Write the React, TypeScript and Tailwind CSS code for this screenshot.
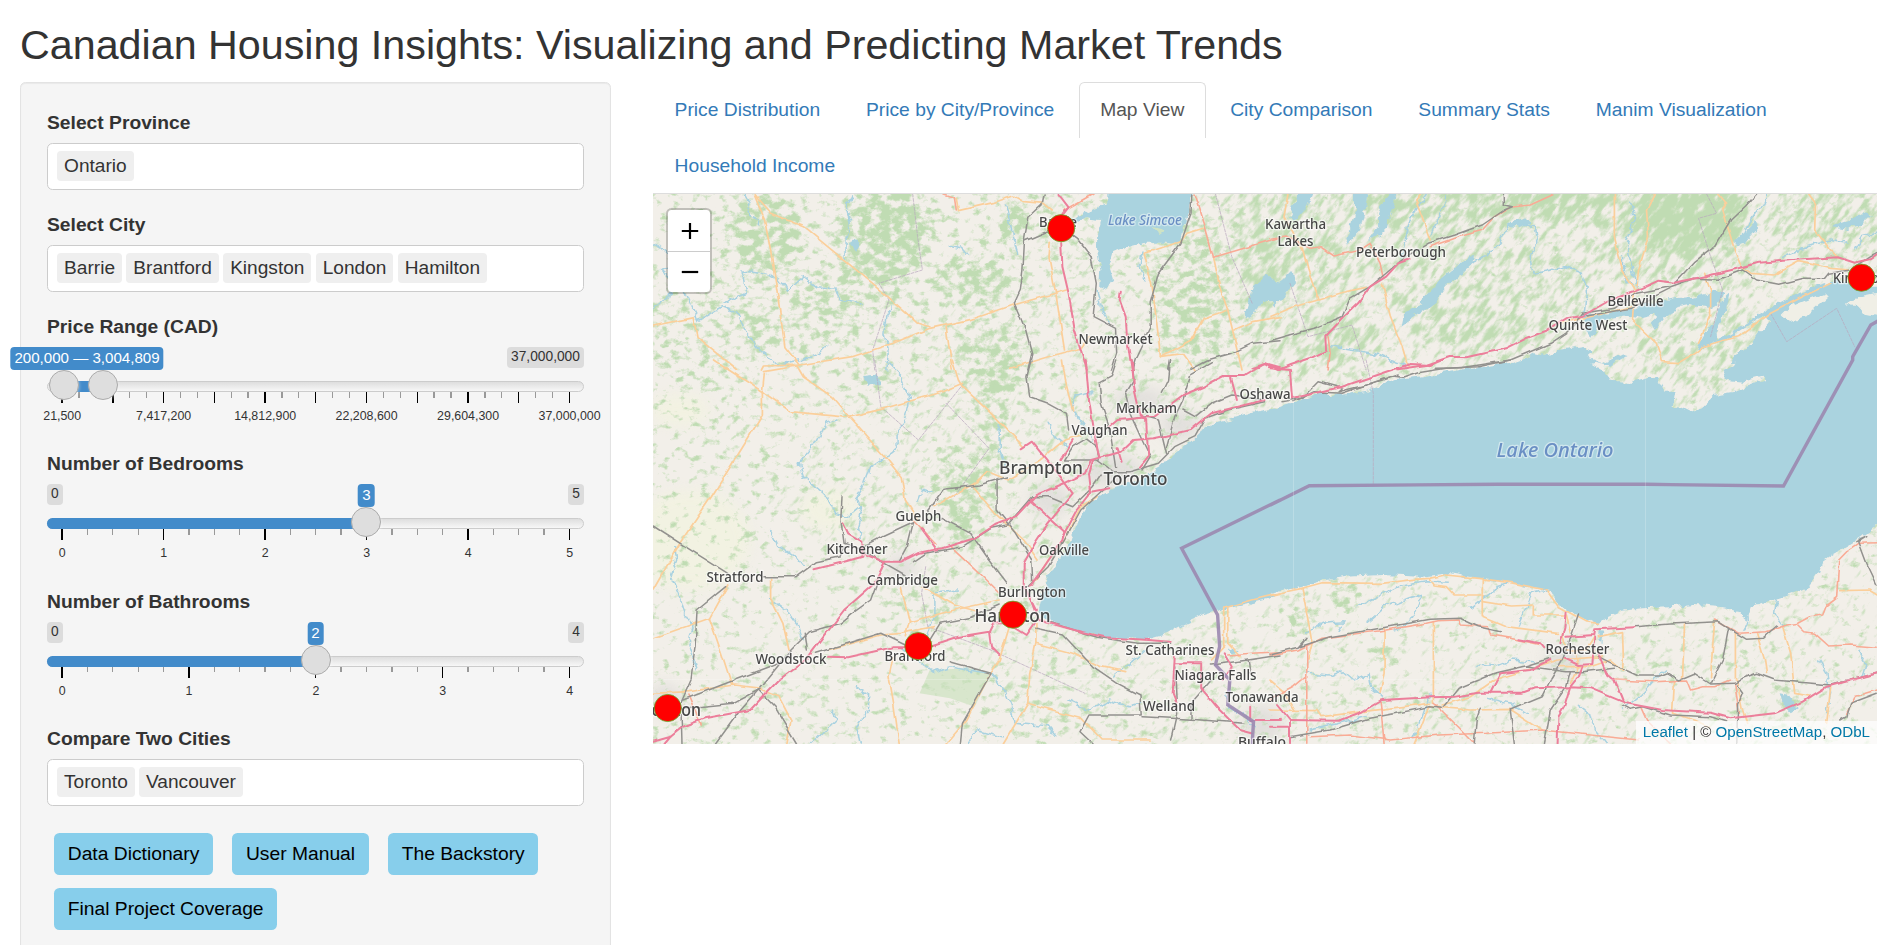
import React from "react";

/* ---------- sidebar ---------- */

function Label({ children }: { children: React.ReactNode }) {
  return (
    <div className="mb-[7px] h-[27.4px] text-[19.25px] leading-[27px] font-bold whitespace-nowrap">{children}</div>
  );
}

function MultiSelect({ label, items }: { label: string; items: string[] }) {
  return (
    <div className="mb-[20.7px]">
      <Label>{label}</Label>
      <div className="flex h-[46.75px] items-start gap-[4.5px] rounded-[5.5px] border border-[#ccc] bg-white pt-[7px] pl-[9.2px]">
        {items.map((i) => (
          <span
            key={i}
            className="h-[30px] rounded-[4px] bg-[#efefef] px-[6.9px] text-[19.1px] leading-[29.5px] text-[#333]"
          >
            {i}
          </span>
        ))}
      </div>
    </div>
  );
}

interface SliderProps {
  label: string;
  min?: string;
  max: string;
  value: string;
  valueAt: number;
  handles: number[];
  labels: string[];
  big: number;
  ticks: number;
}

function Slider({ label, min, max, value, valueAt, handles, labels, big, ticks }: SliderProps) {
  const from = handles.length > 1 ? handles[0] : 0;
  const to = handles[handles.length - 1];
  return (
    <div className="mb-[20.6px]">
      <Label>{label}</Label>
      <div className="relative h-[82.45px] leading-none">
        {min !== undefined && (
          <span className="absolute top-0 left-0 h-[21px] rounded-[4px] bg-[#dcdcdc] px-[4.1px] text-[13.75px] leading-[20px]">
            {min}
          </span>
        )}
        <span className="absolute top-0 right-0 h-[21px] rounded-[4px] bg-[#dcdcdc] px-[4.1px] text-[13.75px] leading-[20px]">
          {max}
        </span>
        <div className="absolute top-[34px] right-0 left-0 h-[11px] rounded-[6px] border border-[#ccc] bg-gradient-to-b from-[#dedede] to-[#f7f7f7]" />
        <div
          className={
            handles.length > 1
              ? "absolute top-[34px] h-[11px] bg-[#428bca]"
              : "absolute top-[34px] h-[11px] rounded-l-[6px] bg-[#428bca]"
          }
          style={{ left: from, width: to - from }}
        />
        {Array.from({ length: ticks + 1 }, (_, i) => {
          const isBig = i % big === 0;
          return (
            <div
              key={i}
              className={
                isBig
                  ? "absolute top-[45px] h-[11px] w-[1.4px] bg-black"
                  : "absolute top-[45px] h-[5.5px] w-[1.3px] bg-[#999]"
              }
              style={{ left: 14.4 + (507.4 * i) / ticks }}
            />
          );
        })}
        {labels.map((l, i) => (
          <span
            key={l}
            className="absolute top-[62px] -translate-x-1/2 text-[12.4px] leading-[14px] whitespace-nowrap"
            style={{ left: 15.2 + (507.4 * i) / (labels.length - 1) }}
          >
            {l}
          </span>
        ))}
        <span
          className="absolute top-0 h-[23px] -translate-x-1/2 rounded-[4px] bg-[#428bca] px-[4.1px] text-[15.1px] leading-[21px] whitespace-nowrap text-white"
          style={{ left: valueAt }}
        >
          {value}
        </span>
        {handles.map((h) => (
          <div
            key={h}
            className="absolute top-[23px] h-[30px] w-[30px] rounded-full border border-[#ababab] bg-[#dedede] shadow-[1px_1px_3px_rgba(255,255,255,0.3)]"
            style={{ left: h - 15 }}
          />
        ))}
      </div>
    </div>
  );
}

function LinkButton({ children }: { children: React.ReactNode }) {
  return (
    <button className="h-[42px] rounded-[5.5px] bg-[#87ceeb] px-[13.75px] text-[19.25px] leading-[41px] whitespace-nowrap text-black">
      {children}
    </button>
  );
}

/* ---------- map geometry ----------
   The drawing is digitised on four sheets; each has its own origin and scale. */

type Sheet = "nw" | "ne" | "sw" | "se";
const SHEETS: Record<Sheet, [number, number, number, number]> = {
  nw: [640, 70, 2.45, 3],
  ne: [1270, 70, 2.4968, 3],
  sw: [640, 360, 2.45, 3],
  se: [1270, 360, 2.4968, 3],
};

function pts(sheet: Sheet, s: string): string {
  const [ox, oy, sx, sy] = SHEETS[sheet];
  return s
    .trim()
    .split(/\s+/)
    .map((p) => {
      const [x, y] = p.split(",").map(Number);
      return (ox + x / sx).toFixed(1) + "," + (oy + y / sy).toFixed(1);
    })
    .join(" ");
}

function Lines({ data }: { data: [Sheet, string][] }) {
  return (
    <>
      {data.map(([sheet, s], i) => (
        <polyline key={i} points={pts(sheet, s)} />
      ))}
    </>
  );
}

const LAKE_ONTARIO = [
  pts("sw", "975,745 985,700 1000,650 1025,600 1050,560 1065,520 1075,480 1095,440 1120,410 1150,390 1180,375 1210,370 1235,355 1255,335 1285,315 1305,285 1340,255 1375,215 1410,190 1460,175 1500,158 1568,142"),
  pts("se", "60,128 110,106 180,104 240,92 310,58 370,50 440,37 520,20 590,7"),
  pts("ne", "600,885 640,868 660,850 690,858 720,840 780,828 805,845 790,862 830,880 850,870 880,850 895,855 870,872 850,885 810,875"),
  pts("se", "800,8 830,30 850,62 900,66 950,50 965,52 985,95 1010,95 1003,138 1030,140 1060,158 1085,135 1110,105 1160,95 1190,80 1237,60 1230,50 1180,65 1140,60 1130,30 1165,8"),
  pts("ne", "1150,880 1168,850 1205,820 1222,790 1250,755 1235,735 1200,760 1150,800 1130,822 1105,815 1130,800 1190,760 1260,705 1320,665 1360,650 1400,636 1440,632 1480,650 1540,650"),
  pts("se", "1540,480 1516,495 1480,530 1440,560 1410,580 1380,605 1370,640 1345,680 1310,700 1270,715 1220,735 1200,745 1190,785 1175,770 1160,748 1120,740 1060,735 1000,742 930,745 880,752 840,775 820,795 790,775 750,760 720,735 700,690 650,680 580,665 520,655 450,640 380,650 280,645 190,650 130,662 60,685 0,700"),
  pts("sw", "1568,705 1500,725 1435,745 1380,765 1330,795 1290,820 1240,838 1150,832 1080,815 1010,790 975,745"),
].join(" ");

const WATER: [Sheet, string][] = [
  ["nw", "1145,362 1352,362 1345,430 1330,480 1325,520 1290,515 1240,515 1190,530 1160,545 1150,590 1160,630 1145,660 1125,650 1128,600 1120,540 1120,490 1130,450 1090,445 1070,460 1055,445 1100,425 1145,400"],
  ["ne", "785,738 830,730 880,722 910,715 950,700 1010,685 1060,680 1110,665 1130,670 1120,700 1100,715 1060,705 1020,715 985,745 960,782 950,760 965,735 930,745 900,738 830,750 800,800 785,780"],
  ["ne", "1068,845 1080,800 1110,750 1130,690 1145,672 1135,730 1110,785 1112,812 1090,830"],
  ["ne", "328,770 335,730 370,705 400,670 425,630 455,600 480,570 510,555 505,580 470,620 440,650 410,700 370,735 345,755"],
  ["ne", "0,690 0,655 30,630 55,600 60,640 40,670 15,710"],
  ["ne", "48,440 60,400 70,362 108,362 95,405 75,430 60,450"],
  ["ne", "185,530 200,480 212,420 212,362 245,362 235,430 225,480 205,510"],
  ["ne", "245,510 270,470 270,430 285,390 305,362 318,362 300,430 295,470 270,500"],
  ["ne", "590,465 610,450 640,445 650,460 625,475"],
  ["ne", "1400,470 1450,450 1480,430 1500,436 1480,460 1440,480"],
  ["ne", "1160,520 1190,480 1215,450 1220,470 1190,510"],
  ["nw", "1478,740 1500,650 1535,620 1568,640 1568,700 1530,690 1500,745"],
  ["nw", "510,520 525,505 540,525 530,545"],
  ["sw", "552,45 585,40 588,75 560,80"],
  ["sw", "1440,870 1455,865 1462,880 1448,887"],
  ["se", "820,812 832,815 830,845 820,840"],
  ["se", "1275,1000 1295,1005 1320,1045 1300,1060 1285,1040"],
];

const ISLANDS: [Sheet, string][] = [
  ["ne", "1275,740 1300,710 1340,690 1385,670 1390,685 1365,710 1340,738 1300,757"],
  ["ne", "1440,705 1470,680 1530,665 1530,745 1490,735 1470,708"],
  ["ne", "1030,800 1050,780 1075,790 1060,815"],
];

const RIVERS: [Sheet, string][] = [
  ["nw", "258,372 270,400 262,430 290,450 290,470"],
  ["nw", "520,372 505,420 515,460 505,510 505,570"],
  ["nw", "32,520 60,540 100,560 50,600 110,660 145,750 200,710 240,730 260,790 300,850 340,885"],
  ["nw", "200,700 260,670 250,600 310,610 350,640 360,665 400,620 430,650 480,655 490,690 540,700"],
  ["nw", "32,720 70,680 80,640"],
  ["nw", "620,710 605,740 600,790 608,840 605,900"],
  ["nw", "760,525 790,535 805,555"],
  ["nw", "895,405 905,450 915,510 925,550"],
  ["nw", "1120,660 1130,720 1150,760"],
  ["nw", "1230,540 1225,590 1240,630"],
  ["nw", "340,885 400,870 440,850 460,825"],
  ["ne", "660,615 650,560 665,510 660,470 600,460 575,510 540,560 500,580"],
  ["ne", "660,610 700,600 740,590 780,610 790,660 785,730"],
  ["ne", "390,372 350,450 335,520 330,560"],
  ["ne", "400,500 425,430 440,380"],
  ["ne", "150,830 200,840 260,850 300,870 340,885"],
  ["ne", "900,400 910,440 890,520 905,600 915,650"],
  ["ne", "880,560 880,600 900,640"],
  ["ne", "1240,372 1230,400 1190,470 1170,520"],
  ["ne", "1280,560 1340,530 1400,510 1440,520"],
  ["ne", "1460,540 1480,500 1516,490"],
  ["sw", "600,0 640,50 660,110 650,170 630,220 630,260 600,290 565,320 550,370 530,410 545,460 535,500 540,540"],
  ["sw", "480,180 455,190 430,250 390,310 400,350 450,400 480,460 510,470 540,440"],
  ["sw", "85,560 90,600 75,650 95,700 110,760 130,800 120,850 140,930"],
  ["sw", "320,510 340,560 380,590 400,620"],
  ["sw", "880,200 880,270 900,330"],
  ["sw", "1000,190 1020,230 1050,260"],
  ["sw", "1105,95 1065,105 1060,150 1090,200 1110,240"],
  ["sw", "320,715 360,750 390,800 400,840"],
  ["sw", "700,830 720,770 720,700 780,690"],
  ["sw", "640,860 680,900 720,935 760,920 800,930 860,940 890,980 910,1040 920,1090 1000,1100 1020,1130"],
  ["sw", "525,980 560,1000 560,1050 530,1100 540,1152"],
  ["sw", "420,1152 480,1080 470,1050"],
  ["sw", "1050,1020 1100,1050 1150,1020 1200,1040 1230,1030"],
  ["sw", "1160,945 1200,910 1240,870"],
  ["sw", "680,420 690,390 720,400"],
  ["sw", "800,1152 830,1110 890,1130"],
  ["se", "215,740 270,710 320,680 390,665 445,670"],
  ["se", "240,790 290,740 350,710 380,700 360,760 340,800 310,810"],
  ["se", "90,820 130,790 185,785 170,815"],
  ["se", "500,745 540,710 570,680 600,670"],
  ["se", "620,795 640,740 655,700 690,690"],
  ["se", "95,940 150,945 180,930 210,960 245,940 250,980 285,1015"],
  ["se", "520,915 560,920 600,900 660,905"],
  ["se", "880,1050 930,1000 960,960 990,930"],
  ["se", "770,1030 800,1060 810,1110 840,1152"],
  ["se", "540,1015 600,1030 640,1060"],
  ["se", "1265,715 1260,760 1280,800"],
  ["se", "1370,900 1390,940 1400,1000 1390,1060"],
  ["se", "100,1110 170,1090 240,1070"],
  ["se", "360,1130 380,1070 400,1000"],
  ["se", "1470,870 1490,910 1480,950"],
  ["se", "1190,740 1195,790 1185,810"],
  ["sw", "1435,1000 1440,1040 1480,1070 1505,1100"],
];

const SECONDARY: [Sheet, string][] = [
  ["nw", "280,375 305,450 320,540 340,700 355,830 390,885"],
  ["nw", "280,375 320,430 400,470 480,550 580,650 680,760 710,770"],
  ["nw", "32,768 130,743 140,800 240,900"],
  ["nw", "300,900 305,888 390,885 520,860 620,820 710,775 820,745 915,705 1045,660"],
  ["nw", "750,770 765,900"],
  ["nw", "775,385 780,422 865,398 915,378 940,395 990,400 1010,420"],
  ["nw", "1005,520 1002,560 1020,680 1040,840"],
  ["nw", "905,895 1000,860 1080,835 1100,800"],
  ["nw", "1380,475 1340,490 1325,515 1235,550 1255,650 1270,800 1275,860 1350,810 1380,745 1440,720 1475,900"],
  ["nw", "1405,560 1420,650 1440,720"],
  ["nw", "1275,860 1330,850 1360,900"],
  ["nw", "1455,780 1500,755 1568,740"],
  ["ne", "0,740 60,710 120,690 190,665 240,652"],
  ["ne", "80,530 95,600 120,690"],
  ["ne", "45,372 35,440 80,540"],
  ["ne", "380,372 365,395 400,510"],
  ["ne", "280,640 300,740 330,830 345,890"],
  ["ne", "860,372 860,500 880,600 910,660 905,750 930,780 965,820 980,875 1020,878 1060,850 1080,830 1120,815 1170,800 1250,730 1330,680 1400,640"],
  ["ne", "960,372 940,420 945,500 920,600 915,660"],
  ["ne", "1120,372 1140,400 1130,420 1160,540 1180,595 1200,610 1260,615 1320,575 1400,595 1450,600"],
  ["ne", "1345,372 1362,400 1360,480 1400,540 1420,565"],
  ["ne", "1085,610 1100,660 1100,740 1070,820"],
  ["ne", "720,760 800,740 900,710"],
  ["sw", "180,0 300,95 370,155 510,172 600,145 740,95 790,70"],
  ["sw", "300,95 305,35 385,18"],
  ["sw", "385,18 400,50 470,110 515,175 600,290 640,350 650,420 680,480"],
  ["sw", "300,95 300,165 250,265 175,410 100,545 32,690"],
  ["sw", "765,0 780,60 790,80 860,160 940,260"],
  ["sw", "720,440 820,370 850,335 900,360 980,300 1040,240 1080,225"],
  ["sw", "1035,0 1045,80 1060,150"],
  ["sw", "815,380 870,460 940,540 975,600"],
  ["sw", "1120,410 1080,440 1040,540 1000,600 970,660"],
  ["sw", "320,655 320,715 350,790 365,870"],
  ["sw", "32,835 170,775 215,675"],
  ["sw", "170,775 200,880 225,975"],
  ["sw", "460,870 590,825 640,820 720,800"],
  ["sw", "660,785 770,750 880,720"],
  ["sw", "690,680 770,735 830,755"],
  ["sw", "640,680 660,785 650,830"],
  ["sw", "620,890 610,950 620,1020 635,1152"],
  ["sw", "970,790 970,850 955,940 950,1030"],
  ["sw", "905,800 880,900 850,960 800,1080 750,1152"],
  ["sw", "970,850 1060,880 1130,920 1190,935"],
  ["sw", "290,985 340,1010 370,1080 360,1152"],
  ["sw", "32,1000 120,995 230,975 300,985"],
  ["sw", "1430,745 1430,860 1400,900"],
  ["sw", "1440,745 1440,850 1470,890"],
  ["sw", "1430,745 1500,720 1568,700"],
  ["sw", "1000,1050 1080,1075 1130,1140 1250,1140"],
  ["sw", "890,1152 950,1030 1010,1050"],
  ["se", "0,705 80,685 130,668 280,670 360,658 400,655 440,645 520,655 600,668 690,690 720,740 790,785 820,790"],
  ["se", "80,685 95,780 105,850 95,900"],
  ["se", "285,805 285,940 275,1000"],
  ["se", "408,785 408,1030"],
  ["se", "400,658 410,675 440,680 460,705 530,705"],
  ["se", "530,655 530,770 590,800 720,820"],
  ["se", "530,725 600,738 660,735 660,765 740,765 750,820"],
  ["se", "730,820 740,870 790,870 810,830"],
  ["se", "820,830 880,815 882,890 880,930"],
  ["se", "1035,795 1030,960"],
  ["se", "1110,785 1105,860 1100,950"],
  ["se", "1162,820 1162,960"],
  ["se", "1215,820 1235,900 1240,940"],
  ["se", "1280,800 1300,880 1310,1000 1350,1010"],
  ["se", "1425,692 1495,690 1516,705"],
  ["se", "1010,965 1005,1060 1060,1080 1100,1100"],
  ["se", "400,1040 390,1060 360,1152"],
  ["se", "400,1040 500,1050 600,1048 680,1110"],
  ["se", "430,1035 500,1010 560,960 640,930 720,900 830,890"],
  ["se", "720,920 800,920 850,900 880,930"],
  ["se", "0,1050 120,1052 130,1070 400,1030"],
  ["se", "0,960 30,990 60,1050"],
  ["se", "1165,960 1180,1050 1190,1090"],
  ["se", "1400,980 1390,1090"],
  ["se", "760,870 770,920 750,970"],
];

const TRUNK: [Sheet, string][] = [
  ["nw", "745,372 770,382 775,420"],
  ["nw", "1040,420 1110,372"],
  ["nw", "1360,372 1385,470 1405,562 1480,535 1568,502"],
  ["ne", "0,505 40,498 100,535 125,530 160,558 225,540 250,520 275,580 282,620"],
  ["ne", "400,530 470,500 530,480 560,440 600,412 650,405 710,372"],
  ["ne", "145,800 150,850 145,900"],
  ["sw", "670,480 725,550"],
  ["sw", "760,560 830,640 880,700"],
  ["sw", "1440,885 1500,880 1568,875"],
  ["se", "0,885 70,870 130,835 290,810 390,790 420,782 470,780 475,795 545,800 550,825 600,835 680,855"],
  ["se", "92,860 92,1150"],
  ["se", "1110,780 1170,820 1240,815 1290,795 1320,790 1350,770 1380,765 1390,735 1415,712 1420,600 1440,575 1470,550 1516,548"],
  ["se", "1318,795 1335,815 1360,820 1395,858 1450,855 1516,862"],
  ["se", "860,960 960,965 1040,960 1050,990 1080,980 1110,980 1150,960"],
  ["se", "275,1020 285,1152"],
  ["se", "410,1030 470,1100 510,1150"],
  ["se", "100,1130 200,1125 300,1140 420,1125 540,1120 680,1110 800,1125 920,1140"],
  ["se", "925,1040 940,1080 1000,1152"],
  ["se", "1516,990 1460,1010 1440,1060"],
  ["se", "1160,970 1172,1060"],
  ["se", "0,1020 60,980 90,950"],
  ["sw", "120,1005 150,1095"],
];

const RAIL: [Sheet, string][] = [
  ["nw", "990,372 985,405 950,445 942,510 938,600 932,660 917,700 945,780 960,850 950,900"],
  ["nw", "942,513 990,488 1030,470 1070,505 1105,560 1118,640 1110,740 1165,775 1168,850 1155,900"],
  ["nw", "1352,372 1350,430 1325,520 1270,610 1250,700 1250,770 1215,860 1205,900"],
  ["nw", "1300,872 1295,900"],
  ["nw", "1350,895 1390,870 1450,850 1500,820 1568,812"],
  ["ne", "0,812 50,795 110,775 180,740 200,685 250,650 290,610 340,560 395,520 460,495 530,465 585,420 605,410 585,405 585,372"],
  ["ne", "415,895 480,893 600,870 700,820 745,785 780,730 860,715 915,670 1000,650 1060,625 1120,628 1180,600 1215,630 1270,643 1330,625 1385,625 1395,610 1450,600 1500,560 1516,550"],
  ["ne", "790,738 900,715 1000,655"],
  ["ne", "1010,640 1060,575 1110,530 1150,450 1190,405 1215,372"],
  ["sw", "958,0 948,50 955,110 1000,130 1045,160 1050,210"],
  ["sw", "1168,0 1155,50 1125,70 1130,130 1150,200 1165,320"],
  ["sw", "1205,0 1210,60 1190,100 1200,160 1230,240 1250,290 1230,330"],
  ["sw", "1300,0 1295,60 1280,100"],
  ["sw", "1400,5 1350,40 1330,120 1310,170 1290,260"],
  ["sw", "1330,150 1360,170 1400,130 1450,105 1530,120"],
  ["sw", "1530,125 1440,150 1385,175 1360,230 1310,260 1270,310 1200,335 1160,335 1120,300 1040,300 1060,260 1095,235 1120,260 1125,300"],
  ["sw", "1190,180 1240,170 1270,180 1290,280"],
  ["sw", "1160,360 1125,400 1080,450 1040,540 1000,620 950,680"],
  ["sw", "1130,345 1110,380 1060,440 1000,410 960,410 900,495 860,505 790,560 700,580 670,605"],
  ["sw", "900,350 830,375 745,388 705,455"],
  ["sw", "875,355 875,450 920,520 960,600 962,670"],
  ["sw", "740,475 810,520 850,590 900,670"],
  ["sw", "670,485 655,560 635,605"],
  ["sw", "495,410 492,480 500,550 545,570 600,610 650,645"],
  ["sw", "545,560 600,525 670,485"],
  ["sw", "500,560 490,590 430,605 380,650 300,650"],
  ["sw", "32,498 130,575 215,640"],
  ["sw", "210,680 140,750 135,860 125,960 100,1030 103,1152"],
  ["sw", "580,670 565,720 520,760 490,790 415,815 370,870 330,930 290,990 230,1030 105,1045"],
  ["sw", "105,1020 200,975 340,910"],
  ["sw", "430,880 590,820 650,855 700,860 735,790 810,772 880,735"],
  ["sw", "405,820 410,870"],
  ["sw", "760,905 860,940 790,1090 785,1152"],
  ["sw", "1000,785 1120,832 1220,850 1300,850"],
  ["sw", "970,805 1035,822 1110,920 1170,970 1225,1005 1228,1065 1100,1065 1078,1115 1110,1152"],
  ["sw", "1230,1070 1350,1078 1480,1090"],
  ["sw", "1310,920 1315,1060 1300,1140"],
  ["sw", "1400,915 1490,900 1568,885"],
  ["sw", "290,990 330,1040 385,1152"],
  ["sw", "290,990 240,1060 185,1152"],
  ["sw", "1400,960 1350,1030 1350,1078"],
  ["sw", "1490,900 1495,940"],
  ["se", "0,882 70,862 90,835 75,860 150,830 240,812 320,795 400,778 475,775 520,800 575,815"],
  ["se", "770,765 755,820 730,900 700,960 680,1010 600,1050"],
  ["se", "50,1130 150,1110 250,1075 400,1040 430,1045 470,985 560,940 640,918 700,895"],
  ["se", "640,918 740,935 780,935 860,925"],
  ["se", "820,890 870,920 920,948 970,948 990,938 1020,960 1060,940 1100,972 1160,970 1180,955 1215,940 1260,960 1400,975 1450,960 1516,940"],
  ["se", "1100,970 1130,900 1145,805 1120,785 1000,792 910,800"],
  ["se", "1145,805 1190,838 1230,835 1265,798"],
  ["se", "1465,545 1490,530 1470,545 1490,610 1516,675"],
  ["se", "1165,975 1180,1000 1170,1030 1168,1152"],
  ["se", "1516,1000 1450,1030 1440,1070 1425,1080"],
  ["se", "880,1035 900,1048 930,1040 1000,1065 1100,1070 1140,1085"],
  ["se", "525,1045 515,1080 510,1152"],
  ["se", "600,1050 610,1152"],
  ["se", "750,935 740,980 700,1050 685,1152"],
  ["se", "30,125 80,115 120,65 180,85 170,95 240,75 320,45"],
  ["se", "60,125 110,95 180,100 240,75 300,50 330,55 370,38 440,25 520,20 600,0"],
];

const MOTORWAY: [Sheet, string][] = [
  ["nw", "1025,372 1050,412 1035,435"],
  ["nw", "1032,520 1035,590 1050,670 1065,780 1085,860 1095,900"],
  ["nw", "1178,662 1175,690 1190,740 1193,800 1205,900"],
  ["nw", "1500,895 1530,882 1568,900"],
  ["ne", "0,890 20,900 50,885 100,865 140,842 138,800 185,740 220,700 250,650 290,620 320,580 348,568"],
  ["ne", "320,898 390,885 450,860 490,862 590,835 640,805 690,782 740,745 780,738 850,690 910,665 970,632 1010,638 1090,618 1160,598 1220,578 1330,568 1418,562 1460,578 1500,568 1516,555"],
  ["sw", "1092,0 1100,120 1115,230 1125,290"],
  ["sw", "1205,0 1210,80 1225,160 1240,180 1245,290 1225,320"],
  ["sw", "1568,25 1530,12 1480,48 1430,48 1380,80 1330,105 1260,170 1170,180 1150,200"],
  ["sw", "1445,50 1460,120"],
  ["sw", "1530,120 1400,160 1350,210 1260,235 1210,240 1180,275 1105,300 1090,340 1040,370 970,405 920,470 870,495 820,535 740,565 680,580 640,605 600,605 575,670 500,750 450,830 410,895 340,960 270,1050 160,1075 105,1100 75,1130"],
  ["sw", "935,265 960,245 1030,350 1060,400 1000,490 970,545 940,610 940,680 970,750"],
  ["sw", "955,420 1040,515 1035,540 990,620 955,680"],
  ["sw", "1150,385 1105,395 1070,450 1035,530"],
  ["sw", "1105,395 1100,340 1110,300"],
  ["sw", "1170,265 1180,305"],
  ["sw", "1060,240 1030,300 1050,260"],
  ["sw", "425,628 500,605 545,590 545,545 510,520 498,490"],
  ["sw", "545,580 600,607"],
  ["sw", "690,505 725,565"],
  ["sw", "460,890 510,892 620,862 700,862 780,830 855,815 865,790 900,790 945,825 965,790"],
  ["sw", "955,710 975,780 1080,815 1140,832 1220,838 1300,845"],
  ["sw", "855,815 860,860 880,885"],
  ["sw", "1310,890 1305,1000 1315,1030"],
  ["sw", "1310,910 1375,910 1375,985 1420,1050 1470,1110 1500,1120"],
  ["sw", "1430,880 1450,920 1430,960"],
  ["sw", "32,1145 75,1130 60,1152"],
  ["sw", "1495,1040 1495,1080 1568,1080"],
  ["se", "20,1035 50,1080 50,1150"],
  ["se", "0,1100 45,1100"],
  ["se", "50,1080 170,1082 230,1055 280,1020 400,1012 460,1010 520,998 630,998 660,985 750,982 800,985 860,1015 890,1030 980,1050 1100,1058 1150,1075 1260,1060 1330,1025 1390,980 1516,940"],
  ["se", "738,755 735,800 725,850"],
  ["se", "740,830 810,825 812,808 910,802"],
  ["se", "620,838 675,850 685,865"],
  ["se", "550,1000 575,940 650,930 700,900"],
  ["se", "735,895 770,915 805,912 810,830"],
  ["se", "780,920 770,950 750,980 735,1040 720,1070 718,1152"],
  ["se", "820,880 840,940 860,960 880,1020"],
  ["se", "0,25 50,30 55,115 110,100 180,80 290,35 350,12 400,15 430,0"],
];

const BORDER = [
  pts("sw", "1500,1152 1503,1085 1440,1035 1445,960 1410,915 1420,860 1415,765 1327,565 1568,420"),
  pts("se", "0,436 98,377 570,373 940,373 1282,378 1455,0"),
  pts("ne", "1455,860 1500,765 1530,745"),
].join(" ");

const COUNTY: [Sheet, string][] = [
  ["nw", "668,372 680,500 692,600 585,640 610,690 570,840 575,900"],
  ["nw", "1410,372 1450,560 1500,700"],
  ["ne", "50,640 95,800 205,765 240,900"],
  ["ne", "1090,372 1115,430 1070,445 1100,560 1130,660 1100,800"],
  ["ne", "1250,730 1290,815 1415,715 1460,830"],
  ["sw", "575,0 590,140 682,240 790,75"],
  ["sw", "750,130 855,265 770,410"],
  ["sw", "700,620 690,700 705,800 860,870 1090,1000"],
  ["se", "240,0 258,100 258,370"],
];

interface Place {
  name: string;
  x: number;
  y: number;
  w: number;
  big?: boolean;
}

const PLACES: Place[] = [
  { name: "Barrie", x: 1058, y: 227, w: 38 },
  { name: "Kawartha", x: 1295.5, y: 229, w: 61 },
  { name: "Lakes", x: 1295.5, y: 246, w: 36 },
  { name: "Peterborough", x: 1401, y: 257, w: 90 },
  { name: "Newmarket", x: 1115.5, y: 344, w: 74 },
  { name: "Belleville", x: 1635.5, y: 306, w: 56 },
  { name: "Quinte West", x: 1588, y: 330, w: 79 },
  { name: "Kingston", x: 1860, y: 283, w: 54 },
  { name: "Oshawa", x: 1265, y: 399, w: 51 },
  { name: "Markham", x: 1146.5, y: 413, w: 61 },
  { name: "Vaughan", x: 1099.5, y: 435, w: 56 },
  { name: "Brampton", x: 1041, y: 473.5, w: 84, big: true },
  { name: "Toronto", x: 1135.5, y: 484.5, w: 64, big: true },
  { name: "Guelph", x: 918.5, y: 521, w: 46 },
  { name: "Kitchener", x: 857, y: 553.5, w: 61 },
  { name: "Oakville", x: 1064, y: 555, w: 50 },
  { name: "Stratford", x: 735, y: 582, w: 57 },
  { name: "Cambridge", x: 902.5, y: 585, w: 71 },
  { name: "Burlington", x: 1032, y: 597, w: 68 },
  { name: "Hamilton", x: 1012.5, y: 621.5, w: 76, big: true },
  { name: "Brantford", x: 915, y: 660.5, w: 61 },
  { name: "Woodstock", x: 791, y: 664, w: 71 },
  { name: "London", x: 672, y: 715.5, w: 58, big: true },
  { name: "St. Catharines", x: 1170, y: 654.5, w: 89 },
  { name: "Niagara Falls", x: 1215.5, y: 679.5, w: 82 },
  { name: "Welland", x: 1169, y: 711, w: 52 },
  { name: "Tonawanda", x: 1262, y: 701.5, w: 73 },
  { name: "Buffalo", x: 1262, y: 747, w: 48 },
  { name: "Rochester", x: 1577.5, y: 654, w: 64 },
];

const MARKERS: [number, number][] = [
  [1061.2, 228.2],
  [1861.5, 277.7],
  [1013, 614.7],
  [918.4, 646.2],
  [667.8, 708],
];

/* cx, cy, rx, ry, density */
const FOREST: [number, number, number, number, number][] = [
  [765, 235, 36, 45, 0.5],
  [880, 235, 46, 45, 0.5],
  [910, 225, 26, 40, 0.3],
  [850, 290, 60, 25, 0.32],
  [1015, 222, 14, 22, 0.6],
  [975, 280, 44, 22, 0.45],
  [990, 350, 40, 30, 0.35],
  [700, 330, 70, 60, 0.15],
  [800, 325, 70, 30, 0.2],
  [875, 370, 16, 24, 0.35],
  [1000, 385, 30, 16, 0.4],
  [990, 440, 14, 60, 0.42],
  [965, 510, 22, 40, 0.5],
  [950, 470, 22, 26, 0.3],
  [745, 540, 10, 8, 0.5],
  [1190, 270, 40, 50, 0.3],
  [1200, 330, 40, 40, 0.3],
  [925, 605, 40, 30, 0.18],
  [740, 460, 60, 60, 0.06],
  [800, 710, 120, 30, 0.06],
  [1300, 615, 20, 22, 0.35],
  [1348, 598, 14, 14, 0.55],
  [1383, 656, 12, 8, 0.7],
  [1588, 695, 10, 8, 0.55],
  [1670, 613, 22, 7, 0.42],
  [1640, 670, 50, 20, 0.12],
  [1740, 660, 16, 16, 0.14],
  [1790, 700, 10, 20, 0.55],
  [1380, 710, 100, 30, 0.1],
  [1060, 700, 80, 30, 0.1],
  [1800, 590, 50, 20, 0.12],
];

const SHIELD: [number, number, number, number, number][] = [
  [1300, 300, 60, 80, 0.24],
  [1330, 230, 90, 50, 0.2],
  [1440, 205, 80, 22, 0.5],
  [1560, 200, 60, 18, 0.75],
  [1490, 290, 100, 70, 0.26],
  [1470, 325, 50, 16, 0.25],
  [1690, 215, 60, 32, 0.95],
  [1650, 240, 60, 40, 0.35],
  [1720, 265, 40, 30, 0.25],
  [1830, 215, 60, 40, 0.3],
  [1345, 340, 40, 22, 0.4],
  [1700, 335, 70, 35, 0.22],
  [1250, 240, 40, 60, 0.25],
  [1690, 375, 50, 25, 0.18],
  [1820, 305, 30, 20, 0.1],
];

function Ellipses({ data }: { data: [number, number, number, number, number][] }) {
  return (
    <>
      {data.map(([cx, cy, rx, ry, o], i) => (
        <ellipse key={i} cx={cx} cy={cy} rx={rx} ry={ry} opacity={o} filter="url(#soft)" />
      ))}
    </>
  );
}

function Basemap() {
  return (
    <svg viewBox="653 194 1224 550" className="block h-[550px] w-full" fill="none" strokeLinejoin="round" strokeLinecap="round">
      <defs>
        <filter id="soft" x="-100%" y="-100%" width="300%" height="300%">
          <feGaussianBlur stdDeviation="7" />
        </filter>
        <filter id="forest" filterUnits="userSpaceOnUse" x="640" y="180" width="1250" height="580" colorInterpolationFilters="sRGB">
          <feTurbulence type="fractalNoise" baseFrequency="0.1 0.13" numOctaves="5" seed="7" result="n" />
          <feComposite in="SourceGraphic" in2="n" operator="arithmetic" k2="0.5" k3="1" k4="-0.63" />
          <feComponentTransfer result="m">
            <feFuncA type="linear" slope="4.5" intercept="0" />
          </feComponentTransfer>
          <feFlood floodColor="#c0dcb3" />
          <feComposite in2="m" operator="in" />
          <feGaussianBlur stdDeviation="0.5" />
        </filter>
        <filter id="shield" filterUnits="userSpaceOnUse" x="900" y="-200" width="1200" height="1000" colorInterpolationFilters="sRGB">
          <feTurbulence type="fractalNoise" baseFrequency="0.07 0.18" numOctaves="5" seed="11" result="n" />
          <feComposite in="SourceGraphic" in2="n" operator="arithmetic" k2="0.5" k3="1" k4="-0.63" />
          <feComponentTransfer result="m">
            <feFuncA type="linear" slope="4" intercept="0" />
          </feComponentTransfer>
          <feFlood floodColor="#c0dcb3" />
          <feComposite in2="m" operator="in" />
          <feGaussianBlur stdDeviation="0.5" />
        </filter>
        <filter id="coast" filterUnits="userSpaceOnUse" x="640" y="180" width="1250" height="580" colorInterpolationFilters="sRGB">
          <feTurbulence type="fractalNoise" baseFrequency="0.1" numOctaves="3" seed="3" result="n" />
          <feDisplacementMap in="SourceGraphic" in2="n" scale="8" xChannelSelector="R" yChannelSelector="G" />
          <feGaussianBlur stdDeviation="0.4" />
        </filter>
        <filter id="wobble" filterUnits="userSpaceOnUse" x="640" y="180" width="1250" height="580" colorInterpolationFilters="sRGB">
          <feTurbulence type="fractalNoise" baseFrequency="0.07" numOctaves="2" seed="5" result="n" />
          <feDisplacementMap in="SourceGraphic" in2="n" scale="4" xChannelSelector="R" yChannelSelector="G" />
          <feGaussianBlur stdDeviation="0.45" />
        </filter>
      </defs>

      <rect x="653" y="194" width="1224" height="550" fill="#f2efe9" />

      <g fill="#f3f7d8" opacity="0.4">
        <ellipse cx="690" cy="540" rx="60" ry="50" filter="url(#soft)" />
        <ellipse cx="680" cy="410" rx="30" ry="16" filter="url(#soft)" />
        <ellipse cx="830" cy="510" rx="30" ry="20" filter="url(#soft)" />
      </g>
      <g fill="#dcdad8" opacity="0.75">
        <ellipse cx="1110" cy="470" rx="32" ry="16" filter="url(#soft)" />
        <ellipse cx="1050" cy="500" rx="20" ry="16" filter="url(#soft)" />
        <ellipse cx="1140" cy="400" rx="26" ry="12" filter="url(#soft)" />
        <ellipse cx="1180" cy="425" rx="20" ry="14" filter="url(#soft)" />
        <ellipse cx="902" cy="568" rx="14" ry="14" filter="url(#soft)" />
        <ellipse cx="665" cy="700" rx="16" ry="16" filter="url(#soft)" />
        <ellipse cx="1565" cy="660" rx="20" ry="14" filter="url(#soft)" />
        <ellipse cx="1262" cy="725" rx="20" ry="20" filter="url(#soft)" />
      </g>

      <g filter="url(#forest)" fill="#000">
        <rect x="640" y="180" width="600" height="240" opacity="0.13" />
        <rect x="640" y="420" width="600" height="340" opacity="0.07" />
        <Ellipses data={FOREST} />
      </g>
      <g transform="rotate(-52 1550 290)">
        <g filter="url(#shield)">
          <g transform="rotate(52 1550 290)" fill="#000">
            <rect x="1240" y="180" width="650" height="230" opacity="0.17" />
            <Ellipses data={SHIELD} />
          </g>
        </g>
      </g>
      <polygon points={pts("sw", "710,930 810,925 858,945 820,1040 760,1015 685,1000")} fill="#c6dfb9" opacity="0.6" />

      <g filter="url(#coast)">
        <g stroke="#a9d2e0" strokeWidth="1.5">
          <Lines data={RIVERS} />
        </g>
        <g fill="#aad3df">
          <polygon points={LAKE_ONTARIO} />
          {WATER.map(([s, d], i) => (
            <polygon key={i} points={pts(s, d)} />
          ))}
        </g>
        <g fill="#f0efe6">
          {ISLANDS.map(([s, d], i) => (
            <polygon key={i} points={pts(s, d)} />
          ))}
        </g>
        <polygon points={pts("nw", "1258,468 1290,478 1270,498")} fill="#cfe3c4" />
      </g>

      <g stroke="#b9a8be" strokeWidth="1" opacity="0.7" strokeDasharray="3 1.5">
        <Lines data={COUNTY} />
      </g>
      <g filter="url(#wobble)">
        <g stroke="#fbcf9b" strokeWidth="1.7">
          <Lines data={SECONDARY} />
        </g>
        <g stroke="#f9ab95" strokeWidth="1.6">
          <Lines data={TRUNK} />
        </g>
        <g stroke="#92918e" strokeWidth="1.5">
          <Lines data={RAIL} />
        </g>
        <g stroke="#ec7f9b" strokeWidth="2">
          <Lines data={MOTORWAY} />
        </g>
      </g>
      <polyline points={BORDER} stroke="#9b88b0" strokeWidth="3.4" opacity="0.9" strokeLinejoin="miter" />

      <g stroke="#ffffff" strokeWidth="0.7" opacity="0.3">
        <path d="M1293.500 380V590M1645.500 380V620M653 679.500H1877" />
      </g>

      <g
        textAnchor="middle"
        fill="#474747"
        stroke="#ffffff"
        strokeOpacity="0.6"
        strokeWidth="2.6"
        className="font-['Noto_Sans','Open_Sans',sans-serif] font-medium [paint-order:stroke]"
      >
        {PLACES.map((p) => (
          <text
            key={p.name}
            x={p.x}
            y={p.y}
            textLength={p.w}
            lengthAdjust="spacingAndGlyphs"
            className={p.big ? "text-[18.5px]" : "text-[14.2px]"}
          >
            {p.name}
          </text>
        ))}
        <g fill="#6a8fc4" strokeOpacity="0.45" className="italic">
          <text x="1145" y="224.500" textLength="74" lengthAdjust="spacingAndGlyphs" className="text-[14px]">
            Lake Simcoe
          </text>
          <text x="1555" y="457" textLength="117" lengthAdjust="spacingAndGlyphs" className="text-[20.5px]">
            Lake Ontario
          </text>
        </g>
      </g>

      <g fill="#ff0000" stroke="#5fae2e" strokeWidth="0.8">
        {MARKERS.map(([x, y]) => (
          <circle key={x} cx={x} cy={y} r="13.6" />
        ))}
      </g>
    </svg>
  );
}

/* ---------- page ---------- */

const TABS = [
  "Price Distribution",
  "Price by City/Province",
  "Map View",
  "City Comparison",
  "Summary Stats",
  "Manim Visualization",
  "Household Income",
];

export default function App() {
  return (
    <div className="h-[945px] w-full overflow-hidden bg-white pt-[14px] pl-5 font-['Liberation_Sans',Arial,sans-serif] text-[#333]">
      <h1 className="mb-[14px] h-[54px] text-[41.25px] leading-[62px] font-normal whitespace-nowrap">
        Canadian Housing Insights: Visualizing and Predicting Market Trends
      </h1>
      <div className="flex items-start">
        <aside className="h-[900px] w-[591px] shrink-0 rounded-[5.5px] border border-[#e3e3e3] bg-[#f5f5f5] px-[26px] pt-[26px] shadow-[inset_0_1px_1px_rgba(0,0,0,0.05)]">
          <MultiSelect label="Select Province" items={["Ontario"]} />
          <MultiSelect label="Select City" items={["Barrie", "Brantford", "Kingston", "London", "Hamilton"]} />
          <Slider
            label="Price Range (CAD)"
            max="37,000,000"
            value="200,000 — 3,004,809"
            valueAt={40}
            handles={[17, 56]}
            labels={["21,500", "7,417,200", "14,812,900", "22,208,600", "29,604,300", "37,000,000"]}
            big={3}
            ticks={30}
          />
          <Slider
            label="Number of Bedrooms"
            min="0"
            max="5"
            value="3"
            valueAt={319.4}
            handles={[319]}
            labels={["0", "1", "2", "3", "4", "5"]}
            big={4}
            ticks={20}
          />
          <Slider
            label="Number of Bathrooms"
            min="0"
            max="4"
            value="2"
            valueAt={268.5}
            handles={[268.5]}
            labels={["0", "1", "2", "3", "4"]}
            big={5}
            ticks={20}
          />
          <MultiSelect label="Compare Two Cities" items={["Toronto", "Vancouver"]} />
          <div className="flex flex-wrap gap-x-[19.1px] gap-y-[13px] pt-[6px] pl-[7px]">
            <LinkButton>Data Dictionary</LinkButton>
            <LinkButton>User Manual</LinkButton>
            <LinkButton>The Backstory</LinkButton>
            <LinkButton>Final Project Coverage</LinkButton>
          </div>
        </aside>

        <main className="ml-[42px] w-[1224px] shrink-0">
          <nav className="flex h-[112px] flex-wrap content-start gap-x-[2.7px] border-b border-[#ddd]">
            {TABS.map((t) => (
              <a
                key={t}
                className={
                  t === "Map View"
                    ? "h-[56px] rounded-t-[5.5px] border border-b-0 border-[#ddd] px-[20.6px] text-[19.25px] leading-[53px] whitespace-nowrap text-[#555]"
                    : "h-[56px] border border-b-0 border-transparent px-[20.6px] text-[19.25px] leading-[53px] whitespace-nowrap text-[#337ab7]"
                }
              >
                {t}
              </a>
            ))}
          </nav>
          <div className="relative">
            <Basemap />
            <div className="absolute top-[14px] left-[13px] flex h-[86px] w-[46px] flex-col rounded-[5.5px] border-[2.75px] border-black/20 bg-white bg-clip-padding">
              <div className="flex flex-1 items-center justify-center border-b border-[#ccc]">
                <svg className="mt-[2px] ml-[1px] h-[18px] w-[18px]" viewBox="0 0 18 18" stroke="#000" strokeWidth="2.2">
                  <path d="M0.800 9h16.400M9 1v16" />
                </svg>
              </div>
              <div className="flex flex-1 items-center justify-center">
                <svg className="ml-[1px] h-[18px] w-[18px]" viewBox="0 0 18 18" stroke="#000" strokeWidth="2.2">
                  <path d="M0.800 9h16.400" />
                </svg>
              </div>
            </div>
            <div className="absolute right-0 bottom-0 h-[23px] bg-white/70 px-[7px] text-[15.1px] leading-[22px] whitespace-nowrap">
              <span className="text-[#0078a8]">Leaflet</span> | © <span className="text-[#0078a8]">OpenStreetMap</span>,{" "}
              <span className="text-[#0078a8]">ODbL</span>
            </div>
          </div>
        </main>
      </div>
    </div>
  );
}
